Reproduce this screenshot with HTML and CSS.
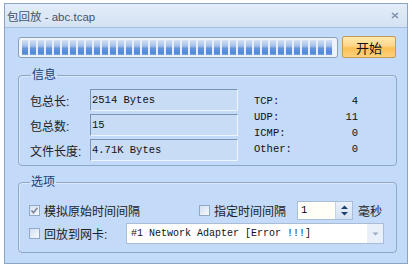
FILE: index.html
```html
<!DOCTYPE html>
<html>
<head>
    <meta charset="utf-8">
    <title>包回放 - abc.tcap</title>
    <link rel="stylesheet" href="styles.css">
</head>
<body>
<div class="window">
    <div class="titlebar">
        <span class="title">包回放 - abc.tcap</span>
        <svg class="close" width="8" height="7" viewBox="0 0 8 7">
            <path d="M1 1 L7 6 M7 1 L1 6" stroke="#7d8fa9" stroke-width="1.6"/>
        </svg>
    </div>
    <div class="content">
        <div class="toprow">
            <div class="progress"><div class="bar"></div></div>
            <button class="btn">开始</button>
        </div>

        <fieldset class="group info">
            <legend>信息</legend>
            <div class="infobody">
                <div class="fields">
                    <div class="row"><span class="lbl">包总长:</span><span class="box">2514 Bytes</span></div>
                    <div class="row"><span class="lbl">包总数:</span><span class="box">15</span></div>
                    <div class="row"><span class="lbl">文件长度:</span><span class="box">4.71K Bytes</span></div>
                </div>
                <div class="stats">
                    <div class="stat"><span>TCP:</span><span>4</span></div>
                    <div class="stat"><span>UDP:</span><span>11</span></div>
                    <div class="stat"><span>ICMP:</span><span>0</span></div>
                    <div class="stat"><span>Other:</span><span>0</span></div>
                </div>
            </div>
        </fieldset>

        <fieldset class="group options">
            <legend>选项</legend>
            <div class="optrow first">
                <label class="opt wide"><span class="chk on">
                    <svg width="9" height="9" viewBox="0 0 9 9"><path d="M1.5 4.5 L3.5 6.8 L7.5 1.8" fill="none" stroke="#7a8797" stroke-width="1.6"/></svg>
                </span>模拟原始时间间隔</label>
                <label class="opt"><span class="chk"></span>指定时间间隔</label>
                <div class="spin">
                    <span class="val">1</span>
                    <span class="arrows">
                        <svg width="9" height="13" viewBox="0 0 9 13">
                            <path d="M4.5 1.5 L8 5 L1 5 Z" fill="#20406a"/>
                            <path d="M1 8 L8 8 L4.5 11.5 Z" fill="#20406a"/>
                        </svg>
                    </span>
                </div>
                <span class="unit">毫秒</span>
            </div>
            <div class="optrow">
                <label class="opt nic"><span class="chk"></span>回放到网卡:</label>
                <div class="combo">
                    <span class="val">#1 Network Adapter [Error !!!]</span>
                    <span class="drop">
                        <svg width="7" height="4" viewBox="0 0 7 4"><path d="M0.5 0.5 L6.5 0.5 L3.5 3.5 Z" fill="#9aa9bc"/></svg>
                    </span>
                </div>
            </div>
        </fieldset>
    </div>
</div>
</body>
</html>
```

FILE: styles.css
```css
body {
    margin: 0;
    background: #fff;
    font-family: "Liberation Sans", "Noto Sans CJK SC", sans-serif;
}

.window {
    margin: 3px 0 0 4px;
    width: 404px;
    height: 261px;
    box-sizing: border-box;
    border: 1px solid #8aa4c6;
    background: #c3daf8;
    display: flex;
    flex-direction: column;
}

.titlebar {
    height: 23px;
    border-bottom: 1px solid #a6bedc;
    background: linear-gradient(#e4edf8, #d3e2f4);
    display: flex;
    align-items: center;
    justify-content: space-between;
    padding: 0 8px 0 2px;
}

.title {
    font-size: 11.5px;
    color: #46536a;
}

.close {
    margin-top: -1px;
}

.content {
    padding: 9px 10px 0 13px;
}

.toprow {
    display: flex;
    gap: 4px;
    height: 21px;
}

.progress {
    width: 320px;
    height: 21px;
    box-sizing: border-box;
    border: 1px solid #8c9fb9;
    border-radius: 3px;
    background: #eef3fa;
    padding: 2px 4px 2px 3px;
}

.bar {
    height: 100%;
    background:
        repeating-linear-gradient(90deg, transparent 0 6px, #e6eefa 6px 8px),
        linear-gradient(#d4e2f7, #a3bfec 40%, #6896e0 55%, #5486d8 85%, #76a0e2);
}

.btn {
    width: 54px;
    height: 22px;
    margin-top: -1px;
    padding: 0;
    border: 1px solid #c39a57;
    border-radius: 2px;
    background: linear-gradient(#fee9ad, #fdd58a 45%, #fbbf56 55%, #fcd27c);
    font-family: "Noto Sans CJK SC", sans-serif;
    font-size: 13px;
    color: #111;
}

.group {
    margin: 10px 0 0;
    padding: 0;
    min-width: 0;
    border: 1px solid #8ea8cb;
    border-radius: 4px;
    box-shadow: inset 1px 1px 0 #dbe8f9;
}

.group legend {
    margin-left: 1px;
    padding: 0 1px;
    font-size: 12px;
    line-height: 14px;
    color: #1b3f74;
}

.info {
    padding: 7px 0 4px 11px;
}

.infobody {
    display: flex;
    gap: 16px;
}

.fields {
    display: flex;
    flex-direction: column;
    gap: 3px;
}

.row {
    display: flex;
    align-items: center;
    height: 22px;
}

.lbl {
    width: 60px;
    font-size: 12px;
    color: #222;
}

.box {
    width: 148px;
    height: 22px;
    box-sizing: border-box;
    border-top: 1px solid #7c94b4;
    border-left: 1px solid #7c94b4;
    border-bottom: 1px solid #eef4fb;
    border-right: 1px solid #eef4fb;
    background: #c8dcf6;
    padding-left: 1px;
    font-family: "Liberation Mono", monospace;
    font-size: 10.5px;
    line-height: 20px;
    color: #111;
}

.stats {
    width: 104px;
    padding-top: 4px;
}

.stat {
    display: flex;
    justify-content: space-between;
    height: 16px;
    line-height: 16px;
    font-family: "Liberation Mono", monospace;
    font-size: 10.5px;
    color: #111;
}

.options {
    padding: 12px 0 8px 10px;
    margin-top: 9px;
}

.optrow {
    display: flex;
    align-items: center;
    height: 19px;
}

.optrow + .optrow {
    margin-top: 3px;
    height: 21px;
}

.opt {
    display: flex;
    align-items: center;
    gap: 4px;
    font-size: 12px;
    color: #222;
}

.opt.wide {
    width: 170px;
}

.opt.nic {
    width: 97px;
}

.chk {
    width: 11px;
    height: 11px;
    box-sizing: border-box;
    border: 1px solid #91a9c9;
    background: linear-gradient(135deg, #d3dff0, #f7fafe);
    display: flex;
    align-items: center;
    justify-content: center;
}

.spin {
    margin-left: 11px;
    width: 56px;
    height: 19px;
    box-sizing: border-box;
    border: 1px solid #a9bdd6;
    background: #fffff7;
    display: flex;
    justify-content: space-between;
}

.spin .val {
    padding-left: 3px;
    font-family: "Liberation Mono", monospace;
    font-size: 10.5px;
    line-height: 17px;
}

.arrows {
    width: 16px;
    background: linear-gradient(#eaf1fa, #d3e1f3);
    border-left: 1px solid #c4d3e6;
    display: flex;
    align-items: center;
    justify-content: center;
}

.unit {
    margin-left: 5px;
    font-size: 12px;
    color: #222;
}

.combo {
    width: 258px;
    height: 21px;
    box-sizing: border-box;
    border: 1px solid #a9bdd6;
    background: #fff;
    display: flex;
    justify-content: space-between;
}

.combo .val {
    padding-left: 4px;
    font-family: "Liberation Mono", monospace;
    font-size: 10px;
    line-height: 19px;
    color: #111;
}

.drop {
    width: 16px;
    background: #e9f0f9;
    display: flex;
    align-items: center;
    justify-content: center;
}
```
